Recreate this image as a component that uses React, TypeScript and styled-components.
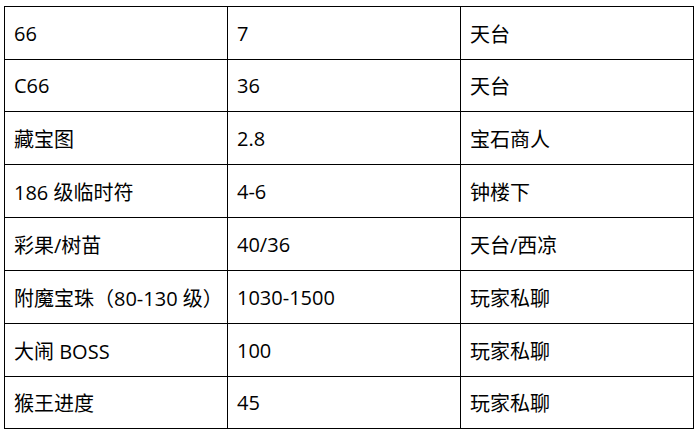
import styled, { createGlobalStyle } from "styled-components";

const Global = createGlobalStyle`
  body {
    margin: 0;
    background: #fff;
  }
`;

const Page = styled.div`
  padding: 6px 0 0 4px;
`;

const Table = styled.div`
  display: grid;
  grid-template-columns: 222px 232px 232px;
  grid-template-rows: 52px 51px 52px 52px 52px 52px 52px 51px;
  gap: 1px;
  padding: 1px;
  width: 690px;
  box-sizing: border-box;
  background: #000;
`;

const Cell = styled.div`
  display: flex;
  align-items: center;
  padding-left: 9px;
  background: #fff;
  color: #000;
  font-family: "Open Sans", "Noto Sans CJK SC", sans-serif;
  font-size: 20px;
  white-space: nowrap;
`;

const rows: [string, string, string][] = [
  ["66", "7", "天台"],
  ["C66", "36", "天台"],
  ["藏宝图", "2.8", "宝石商人"],
  ["186 级临时符", "4-6", "钟楼下"],
  ["彩果/树苗", "40/36", "天台/西凉"],
  ["附魔宝珠（80-130 级）", "1030-1500", "玩家私聊"],
  ["大闹 BOSS", "100", "玩家私聊"],
  ["猴王进度", "45", "玩家私聊"],
];

export default function App() {
  return (
    <>
      <Global />
      <Page>
        <Table>
          {rows.map((r, i) =>
            r.map((c, j) => <Cell key={`${i}-${j}`}>{c}</Cell>)
          )}
        </Table>
      </Page>
    </>
  );
}
